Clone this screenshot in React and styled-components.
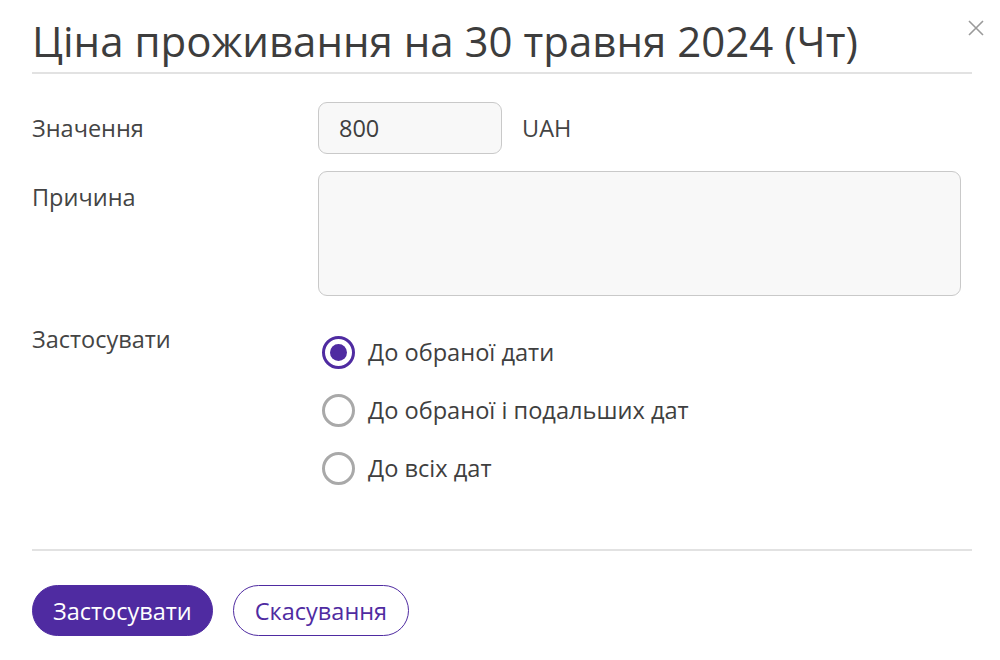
import React, { useState } from 'react';
import styled, { createGlobalStyle } from 'styled-components';

const GlobalStyle = createGlobalStyle`
    html, body {
        margin: 0;
        padding: 0;
        background: #FFFFFF;
    }

    body {
        font-family: "Open Sans", "Noto Sans", sans-serif;
        color: #3f3f3f;
    }
`;

const Dialog = styled.div`
    position: relative;
    width: 1000px;
    height: 660px;
    box-sizing: border-box;
    padding: 0 28px 0 32px;
    background: #FFFFFF;
`;

const Header = styled.div`
    display: flex;
    align-items: flex-end;
    padding-top: 15px;
    padding-bottom: 5px;
    border-bottom: 2px solid #e2e2e2;
`;

const Title = styled.h1`
    margin: 0;
    font-size: 42px;
    font-weight: 400;
    line-height: 52px;
    color: #3d3d3d;
`;

const CloseButton = styled.button`
    position: absolute;
    top: 19px;
    right: 15px;
    width: 18px;
    height: 18px;
    padding: 0;
    border: 0;
    background: none;
    cursor: pointer;
    display: flex;
    align-items: center;
    justify-content: center;
`;

const Form = styled.div`
    display: grid;
    grid-template-columns: 286px 1fr;
    row-gap: 17px;
    margin-top: 28px;
`;

const Label = styled.div`
    padding-top: 12px;
    font-size: 23.5px;
    line-height: 28px;
    color: #444444;
`;

const ValueRow = styled.div`
    display: flex;
    align-items: center;
    gap: 20px;
`;

const fieldStyle = `
    box-sizing: border-box;
    border: 1.5px solid #c9c9c9;
    border-radius: 9px;
    background: #f8f8f8;
    font-family: "Open Sans", "Noto Sans", sans-serif;
    color: #3f3f3f;
    outline: none;
`;

const ValueInput = styled.input`
    ${fieldStyle}
    width: 184px;
    height: 52px;
    padding: 0 20px;
    font-size: 23.5px;
`;

const Currency = styled.span`
    font-size: 23.5px;
    color: #444444;
`;

const ReasonArea = styled.textarea`
    ${fieldStyle}
    display: block;
    width: 643px;
    height: 125px;
    padding: 12px 20px;
    font-size: 23.5px;
    resize: none;
`;

const RadioList = styled.div`
    display: flex;
    flex-direction: column;
    padding-top: 10px;
`;

const RadioRow = styled.label`
    display: flex;
    align-items: center;
    gap: 13px;
    height: 58px;
    padding-left: 4px;
    font-size: 23.6px;
    color: #3f3f3f;
    cursor: pointer;
`;

const RadioCircle = styled.span`
    box-sizing: border-box;
    width: 33px;
    height: 33px;
    flex: 0 0 33px;
    border-radius: 50%;
    border: 3px solid ${({ checked }) => (checked ? '#4f2ba1' : '#a9a9a9')};
    display: flex;
    align-items: center;
    justify-content: center;

    &::after {
        content: '';
        width: 17px;
        height: 17px;
        border-radius: 50%;
        background: ${({ checked }) => (checked ? '#4f2ba1' : 'transparent')};
    }
`;

const Footer = styled.div`
    display: flex;
    gap: 20px;
    margin-top: 52px;
    padding-top: 34px;
    border-top: 2px solid #e2e2e2;
`;

const Button = styled.button`
    box-sizing: border-box;
    height: 51px;
    padding: 0 ${({ primary }) => (primary ? '20px' : '21px')};
    border-radius: 26px;
    border: 1.5px solid #4f2ba1;
    background: ${({ primary }) => (primary ? '#4f2ba1' : '#FFFFFF')};
    color: ${({ primary }) => (primary ? '#FFFFFF' : '#4f2ba1')};
    font-family: "Open Sans", "Noto Sans", sans-serif;
    font-size: 23.5px;
    cursor: pointer;
`;

const options = [
    'До обраної дати',
    'До обраної і подальших дат',
    'До всіх дат',
];

const App = () => {
    const [selected, setSelected] = useState(0);

    return (
        <Dialog>
            <GlobalStyle/>
            <Header>
                <Title>Ціна проживання на 30 травня 2024 (Чт)</Title>
            </Header>
            <CloseButton aria-label="Закрити">
                <svg width="16" height="16" viewBox="0 0 16 16">
                    <path d="M1 1L15 15M15 1L1 15" stroke="#9a9a9a" strokeWidth="1.6" fill="none"/>
                </svg>
            </CloseButton>

            <Form>
                <Label>Значення</Label>
                <ValueRow>
                    <ValueInput defaultValue="800"/>
                    <Currency>UAH</Currency>
                </ValueRow>

                <Label>Причина</Label>
                <div>
                    <ReasonArea/>
                </div>

                <Label>Застосувати</Label>
                <RadioList>
                    {options.map((option, i) => (
                        <RadioRow key={option} onClick={() => setSelected(i)}>
                            <RadioCircle checked={selected === i}/>
                            {option}
                        </RadioRow>
                    ))}
                </RadioList>
            </Form>

            <Footer>
                <Button primary>Застосувати</Button>
                <Button>Скасування</Button>
            </Footer>
        </Dialog>
    );
};

export default App;
